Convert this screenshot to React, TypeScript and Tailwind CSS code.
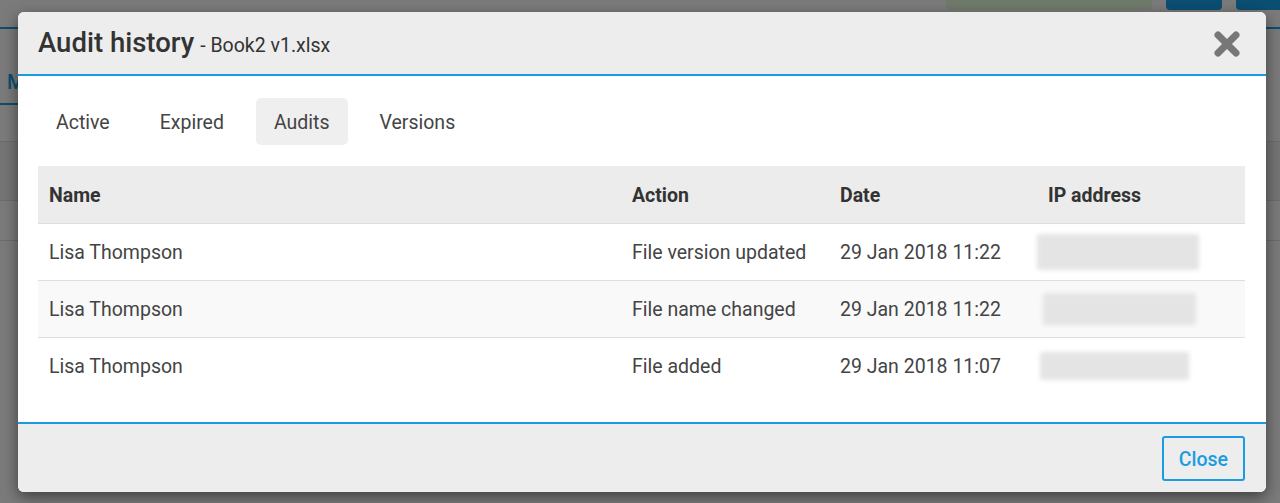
import { useState } from 'react'

type AuditRow = {
  name: string
  action: string
  date: string
  ipWidth: string
}

const rows: AuditRow[] = [
  { name: 'Lisa Thompson', action: 'File version updated', date: '29 Jan 2018 11:22', ipWidth: 'w-[162px] h-[36px]' },
  { name: 'Lisa Thompson', action: 'File name changed', date: '29 Jan 2018 11:22', ipWidth: 'w-[153px] h-[32px] ml-[6px]' },
  { name: 'Lisa Thompson', action: 'File added', date: '29 Jan 2018 11:07', ipWidth: 'w-[149px] h-[28px] ml-[3px]' },
]

const tabs = ['Active', 'Expired', 'Audits', 'Versions']

function CloseIcon() {
  return (
    <svg width="26" height="26" viewBox="0 0 26 26" aria-hidden="true">
      <path d="M4 4 L22 22 M22 4 L4 22" stroke="#777" strokeWidth="7" strokeLinecap="round" />
    </svg>
  )
}

export default function App() {
  const [activeTab, setActiveTab] = useState('Audits')

  return (
    <div className="relative h-[503px] w-[1280px] overflow-hidden bg-[#7b7b7b] font-['Roboto',sans-serif]">
      {/* dimmed page behind the dialog */}
      <div className="flex h-[10px] justify-end gap-[14px]">
        <div className="w-[206px] rounded-b-[4px] bg-[#707b6c]" />
        <div className="w-[56px] rounded-b-[4px] bg-[#0b4f72]" />
        <div className="w-[44px] rounded-bl-[4px] bg-[#0b4f72]" />
      </div>
      <div className="mt-[17px] h-[2px] bg-[#0b4f72]" />
      <div className="flex h-[74px] items-end pb-[6px] pl-[7px] text-[20px] font-medium text-[#0b4f72]">M</div>
      <div className="h-[2px] w-[20px] bg-[#0b4f72]" />
      <div className="mt-[36px] h-[60px] border-y border-[#6c6c6c] bg-[#757575]" />
      <div className="h-[40px] border-b border-[#6c6c6c]" />

      {/* dialog */}
      <div className="absolute left-[18px] top-[12px] flex h-[480px] w-[1248px] flex-col overflow-hidden rounded-[6px] bg-white shadow-[0_5px_15px_rgba(0,0,0,0.5)]">
        <div className="flex h-[64px] items-center justify-between border-b-2 border-[#1a9de0] bg-[#ededed] pl-[20px] pr-[26px]">
          <h2 className="flex items-baseline gap-[6px] text-[#333]">
            <span className="text-[27.5px] font-medium">Audit history</span>
            <span className="text-[19.5px]">- Book2 v1.xlsx</span>
          </h2>
          <button className="mt-[1px]" aria-label="Close">
            <CloseIcon />
          </button>
        </div>

        <div className="flex-1 px-[20px] pt-[22px]">
          <div className="flex gap-[14px]">
            {tabs.map((tab) => (
              <button
                key={tab}
                onClick={() => setActiveTab(tab)}
                className={`h-[47px] rounded-[5px] px-[18px] pt-[2px] text-[19.5px] text-[#444] ${
                  activeTab === tab ? 'bg-[#efefef]' : ''
                }`}
              >
                {tab}
              </button>
            ))}
          </div>

          <table className="mt-[21px] w-[1207px] table-fixed border-collapse text-left text-[19.5px]">
            <colgroup>
              <col className="w-[583px]" />
              <col className="w-[208px]" />
              <col className="w-[208px]" />
              <col className="w-[208px]" />
            </colgroup>
            <thead>
              <tr className="h-[57px] bg-[#ececec] text-[#333]">
                <th className="px-[11px] pt-[2px] font-bold">Name</th>
                <th className="px-[11px] pt-[2px] font-bold">Action</th>
                <th className="px-[11px] pt-[2px] font-bold">Date</th>
                <th className="px-[11px] pt-[2px] font-bold">IP address</th>
              </tr>
            </thead>
            <tbody className="text-[#444]">
              {rows.map((row, i) => (
                <tr key={i} className={`h-[57px] border-t border-[#dedede] ${i === 1 ? 'bg-[#f9f9f9]' : 'bg-white'}`}>
                  <td className="px-[11px] pt-[2px]">{row.name}</td>
                  <td className="px-[11px] pt-[2px]">{row.action}</td>
                  <td className="px-[11px] pt-[2px]">{row.date}</td>
                  <td className="px-0">
                    {/* masked address */}
                    <div className={`rounded-[2px] bg-[#e4e4e4] blur-[2px] ${row.ipWidth}`} />
                  </td>
                </tr>
              ))}
            </tbody>
          </table>
        </div>

        <div className="flex h-[70px] items-center justify-end border-t-2 border-[#1a9de0] bg-[#ededed] pr-[21px]">
          <button className="h-[45px] rounded-[3px] border-2 border-[#1a9de0] px-[15px] pt-[3px] text-[19.5px] font-medium text-[#1a9de0]">
            Close
          </button>
        </div>
      </div>
    </div>
  )
}
